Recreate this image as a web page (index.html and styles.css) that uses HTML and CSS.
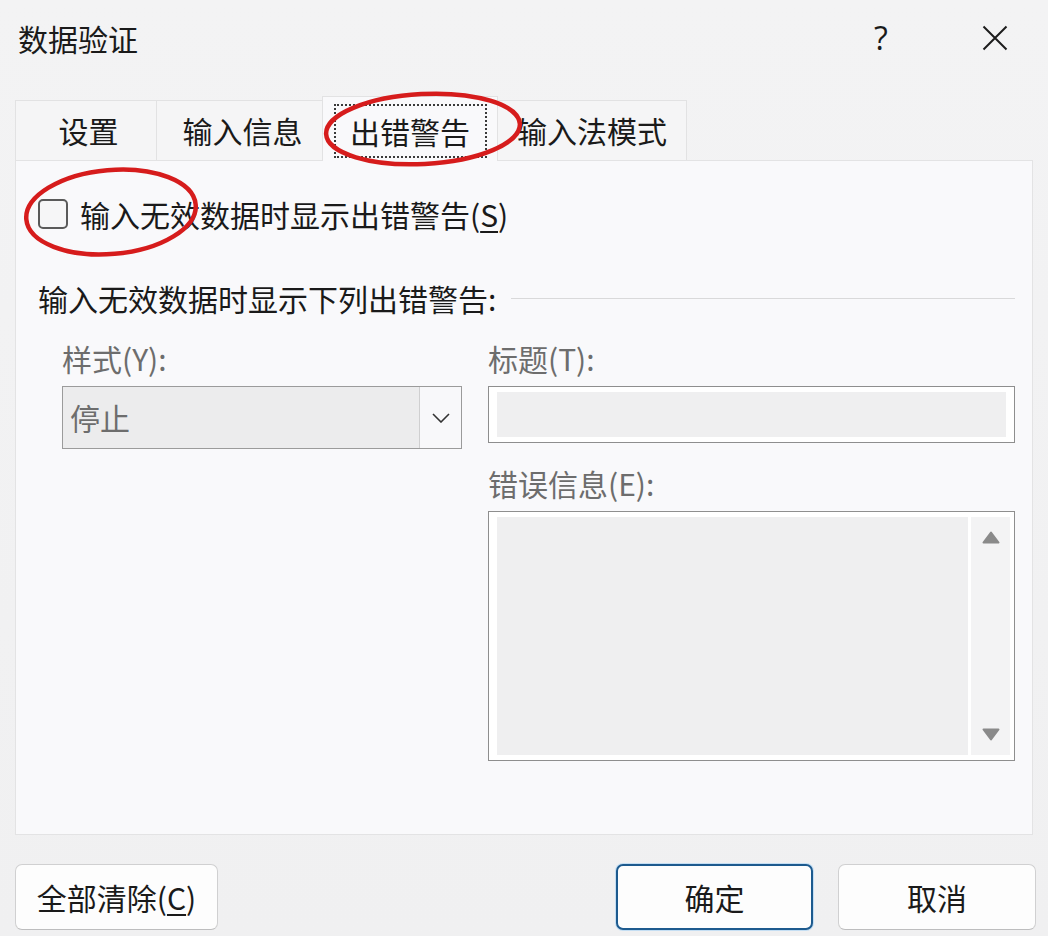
FILE: index.html
```html
<!DOCTYPE html>
<html lang="zh-CN">
<head>
    <meta charset="UTF-8">
    <title>数据验证</title>
    <link rel="stylesheet" href="styles.css">
</head>
<body>
    <div class="dialog">
        <div class="titlebar">
            <span class="title">数据验证</span>
            <span class="help">?</span>
            <span class="close">
                <svg width="26" height="26" viewBox="0 0 26 26"><path d="M1.5 1.5L24.5 24.5M24.5 1.5L1.5 24.5" stroke="#1c1c1c" stroke-width="2" fill="none"/></svg>
            </span>
        </div>

        <!-- Tabs -->
        <div class="tabs">
            <div class="tab tab-settings">设置</div>
            <div class="tab tab-input">输入信息</div>
            <div class="tab active"><span class="focus">出错警告</span></div>
            <div class="tab tab-ime">输入法模式</div>
        </div>

        <div class="panel">
            <div class="check-row">
                <span class="checkbox"></span>
                <span>输入无效数据时显示出错警告(<u>S</u>)</span>
            </div>

            <div class="group-head">
                <span>输入无效数据时显示下列出错警告:</span>
                <span class="rule"></span>
            </div>

            <div class="fields">
                <div class="col-left">
                    <div class="field-label">样式(Y):</div>
                    <div class="select">
                        <span class="select-value">停止</span>
                        <span class="select-btn">
                            <svg width="18" height="10" viewBox="0 0 18 10"><path d="M1 1L9 9L17 1" stroke="#333" stroke-width="1.6" fill="none"/></svg>
                        </span>
                    </div>
                </div>
                <div class="col-right">
                    <div class="field-label">标题(T):</div>
                    <div class="textbox"><div class="textbox-inner"></div></div>
                    <div class="field-label second">错误信息(E):</div>
                    <div class="memo">
                        <div class="memo-inner"></div>
                        <div class="memo-scroll">
                            <svg width="18" height="13" viewBox="0 0 18 13"><path d="M9 1.5L16.5 11.5H1.5Z" fill="#8a8a8a" stroke="#8a8a8a" stroke-width="2" stroke-linejoin="round"/></svg>
                            <svg width="18" height="13" viewBox="0 0 18 13"><path d="M9 11.5L16.5 1.5H1.5Z" fill="#8a8a8a" stroke="#8a8a8a" stroke-width="2" stroke-linejoin="round"/></svg>
                        </div>
                    </div>
                </div>
            </div>
        </div>

        <div class="footer">
            <button class="btn btn-clear">全部清除(<u>C</u>)</button>
            <button class="btn btn-ok">确定</button>
            <button class="btn">取消</button>
        </div>

        <!-- red annotation marks -->
        <svg class="marks" width="1048" height="936" viewBox="0 0 1048 936">
            <ellipse cx="423" cy="129" rx="97" ry="35" transform="rotate(-3 423 129)" fill="none" stroke="#d61c1c" stroke-width="4.5"/>
            <ellipse cx="111" cy="212" rx="85" ry="42" transform="rotate(-5 111 212)" fill="none" stroke="#d61c1c" stroke-width="4.5"/>
        </svg>
    </div>
</body>
</html>
```

FILE: styles.css
```css
body {
    margin: 0;
    background: #f1f1f2;
    font-family: "Noto Sans CJK SC", "Noto Sans", sans-serif;
    color: #1a1a1a;
}

.dialog {
    position: relative;
    width: 1048px;
    height: 936px;
    overflow: hidden;
    background: linear-gradient(#f3f3f4, #f0f0f1);
}

.titlebar {
    display: flex;
    align-items: center;
    height: 76px;
    padding: 0 33px 2px 18px;
}

.title {
    font-size: 30px;
    line-height: 40px;
}

.help {
    margin-left: auto;
    width: 40px;
    text-align: center;
    font-family: "Open Sans", "Noto Sans", sans-serif;
    font-size: 32px;
    line-height: 40px;
}

.close {
    display: flex;
    justify-content: center;
    width: 40px;
    margin-left: 74px;
}

.tabs {
    display: flex;
    align-items: flex-end;
    height: 64px;
    margin-top: 18px;
    padding-left: 15px;
}

.tab {
    box-sizing: border-box;
    height: 60px;
    margin-right: -1px;
    border: 1px solid #e2e2e3;
    border-bottom: none;
    background: #f5f5f6;
    font-size: 30px;
    line-height: 58px;
    text-align: center;
}

.tab-settings {
    width: 142px;
    padding-left: 5px;
}

.tab-input {
    width: 167px;
    padding-left: 6px;
}

.tab-ime {
    width: 190px;
}

.tab.active {
    position: relative;
    z-index: 1;
    display: flex;
    justify-content: center;
    width: 176px;
    height: 65px;
    margin-bottom: -1px;
    background: #f9f9fb;
}

.focus {
    box-sizing: border-box;
    width: 153px;
    height: 54px;
    margin-top: 7px;
    border: 2px dotted #3a3a3a;
    line-height: 50px;
}

.panel {
    box-sizing: border-box;
    height: 675px;
    margin: 0 15px;
    padding: 36px 17px 0 22px;
    border: 1px solid #e3e3e4;
    background: #f9f9fb;
}

.check-row {
    display: flex;
    align-items: center;
    gap: 12px;
    height: 34px;
    font-size: 30px;
    line-height: 34px;
}

.checkbox {
    box-sizing: border-box;
    width: 30px;
    height: 30px;
    border: 2px solid #5a5a5a;
    border-radius: 5px;
    background: #f6f6f7;
}

u {
    text-underline-offset: 4px;
    text-decoration-thickness: 1.5px;
}

.group-head {
    display: flex;
    align-items: center;
    height: 40px;
    margin-top: 47px;
    font-size: 30px;
    line-height: 40px;
}

.rule {
    flex: 1;
    height: 1px;
    margin-left: 15px;
    background: #d9d9da;
}

.fields {
    display: flex;
    gap: 26px;
    margin-top: 20px;
}

.col-left {
    width: 400px;
    margin-left: 24px;
}

.col-right {
    flex: 1;
}

.field-label {
    height: 40px;
    color: #6d6d6d;
    font-size: 30px;
    line-height: 40px;
}

.field-label.second {
    margin-top: 20px;
}

.select {
    box-sizing: border-box;
    display: flex;
    height: 63px;
    margin-top: 8px;
    border: 1px solid #9b9b9b;
    background: #ececed;
}

.select-value {
    flex: 1;
    padding-left: 7px;
    color: #6d6d6d;
    font-size: 30px;
    line-height: 60px;
}

.select-btn {
    display: flex;
    align-items: center;
    justify-content: center;
    width: 41px;
    border-left: 1px solid #cfcfd0;
    background: #f8f8fa;
}

.textbox {
    box-sizing: border-box;
    height: 57px;
    margin-top: 8px;
    padding: 5px 8px;
    border: 1px solid #8e8e8e;
    background: #fff;
}

.textbox-inner {
    height: 100%;
    background: #efeff0;
}

.memo {
    box-sizing: border-box;
    display: flex;
    gap: 3px;
    height: 250px;
    margin-top: 8px;
    padding: 5px 4px 5px 8px;
    border: 1px solid #8e8e8e;
    background: #fff;
}

.memo-inner {
    flex: 1;
    background: #efeff0;
}

.memo-scroll {
    display: flex;
    flex-direction: column;
    align-items: center;
    justify-content: space-between;
    width: 39px;
    padding: 14px 0;
    background: #f3f3f4;
}

.footer {
    display: flex;
    gap: 25px;
    padding: 29px 12px 0 15px;
}

.btn {
    box-sizing: border-box;
    width: 198px;
    height: 66px;
    border: 1px solid #d0d0d1;
    border-bottom-color: #bdbdbe;
    border-radius: 7px;
    background: #fdfdfd;
    color: #1a1a1a;
    font-family: inherit;
    font-size: 30px;
}

.btn-clear {
    width: 203px;
    margin-right: auto;
}

.btn-ok {
    width: 197px;
    border: 2px solid #1d5a8e;
    box-shadow: 0 0 0 1px #c4def3;
}

.marks {
    position: absolute;
    z-index: 2;
    top: 0;
    left: 0;
    pointer-events: none;
}
```
